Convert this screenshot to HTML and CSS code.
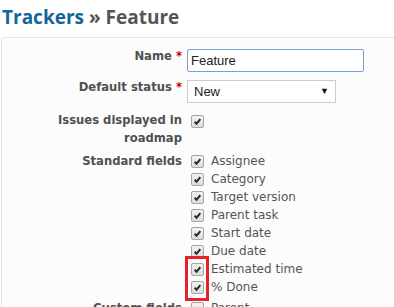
FILE: index.html
```html
<!DOCTYPE html>
<html lang="en">
<head>
    <meta charset="UTF-8">
    <title>Trackers » Feature</title>
    <link rel="stylesheet" href="styles.css">
</head>
<body>
    <h2 class="title"><a href="#" class="crumb">Trackers</a> » Feature</h2>

    <div class="box">
        <div class="row row-input">
            <label class="label">Name <span class="required">*</span></label>
            <div class="field">
                <div class="text-input">Feature</div>
            </div>
        </div>

        <div class="row row-input">
            <label class="label">Default status <span class="required">*</span></label>
            <div class="field">
                <div class="select">
                    <span>New</span>
                    <span class="arrow">▼</span>
                </div>
            </div>
        </div>

        <div class="row row-check">
            <label class="label">Issues displayed in roadmap</label>
            <div class="field">
                <span class="checkbox"><svg viewBox="0 0 13 13"><path d="M3.2 6.8 L5.4 9.2 L9.8 3.6" /></svg></span>
            </div>
        </div>

        <div class="row row-list">
            <label class="label">Standard fields</label>
            <div class="field">
                <ul class="check-list">
                    <li><span class="checkbox"><svg viewBox="0 0 13 13"><path d="M3.2 6.8 L5.4 9.2 L9.8 3.6" /></svg></span>Assignee</li>
                    <li><span class="checkbox"><svg viewBox="0 0 13 13"><path d="M3.2 6.8 L5.4 9.2 L9.8 3.6" /></svg></span>Category</li>
                    <li><span class="checkbox"><svg viewBox="0 0 13 13"><path d="M3.2 6.8 L5.4 9.2 L9.8 3.6" /></svg></span>Target version</li>
                    <li><span class="checkbox"><svg viewBox="0 0 13 13"><path d="M3.2 6.8 L5.4 9.2 L9.8 3.6" /></svg></span>Parent task</li>
                    <li><span class="checkbox"><svg viewBox="0 0 13 13"><path d="M3.2 6.8 L5.4 9.2 L9.8 3.6" /></svg></span>Start date</li>
                    <li><span class="checkbox"><svg viewBox="0 0 13 13"><path d="M3.2 6.8 L5.4 9.2 L9.8 3.6" /></svg></span>Due date</li>
                    <li><span class="checkbox"><svg viewBox="0 0 13 13"><path d="M3.2 6.8 L5.4 9.2 L9.8 3.6" /></svg></span>Estimated time</li>
                    <li><span class="checkbox"><svg viewBox="0 0 13 13"><path d="M3.2 6.8 L5.4 9.2 L9.8 3.6" /></svg></span>% Done</li>
                </ul>
                <div class="highlight"></div>
            </div>
        </div>

        <div class="row row-list">
            <label class="label">Custom fields</label>
            <div class="field">
                <ul class="check-list">
                    <li><span class="checkbox empty"></span>Parent</li>
                </ul>
            </div>
        </div>
    </div>
</body>
</html>
```

FILE: styles.css
```css
* {
    margin: 0;
    padding: 0;
    box-sizing: border-box;
}

body {
    font-family: "DejaVu Sans", Verdana, sans-serif;
    font-size: 12px;
    color: #555;
    background: white;
    padding: 0 0 0 1px;
    overflow: hidden;
}

.title {
    font-family: "Open Sans", "DejaVu Sans", sans-serif;
    font-size: 19px;
    font-weight: bold;
    color: #555;
    line-height: 24px;
    padding: 5px 0 0 1px;
    margin-bottom: 8px;
}

.crumb {
    color: #169;
    text-decoration: none;
}

.box {
    width: 520px;
    background: #fcfcfc;
    border: 1px solid #e4e4e4;
    border-radius: 3px;
    padding: 11px 0 0 0;
}

.row {
    display: flex;
    align-items: flex-start;
    margin-bottom: 8px;
}

.label {
    width: 180px;
    flex-shrink: 0;
    text-align: right;
    font-weight: bold;
    font-size: 11.6px;
    line-height: 18px;
    color: #505050;
}

.row-input .label {
    line-height: 15px;
}

.required {
    color: #bb0000;
}

.field {
    position: relative;
    padding-left: 5px;
}

.text-input {
    width: 177px;
    height: 23px;
    border: 1px solid #7a9ed8;
    border-radius: 2px;
    background: white;
    font-family: "Liberation Sans", Arial, sans-serif;
    font-size: 13px;
    line-height: 21px;
    color: #222;
    padding-left: 3px;
}

.select {
    width: 149px;
    height: 23px;
    border: 1px solid #ccc;
    background: white;
    font-family: "Liberation Sans", Arial, sans-serif;
    font-size: 13px;
    line-height: 21px;
    color: #222;
    padding: 0 6px;
    display: flex;
    justify-content: space-between;
}

.arrow {
    font-size: 9px;
    color: #111;
}

.row-check {
    margin-bottom: 5px;
}

.row-check .field {
    padding-top: 3px;
}

.checkbox {
    display: inline-block;
    width: 13px;
    height: 13px;
    margin-left: 4px;
    border: 1px solid #a5a5a5;
    border-radius: 2px;
    background: linear-gradient(#f2f2f2, #dcdcdc);
    vertical-align: middle;
}

.checkbox svg {
    display: block;
    width: 11px;
    height: 11px;
}

.checkbox path {
    fill: none;
    stroke: #2a2a2a;
    stroke-width: 2.4;
}

.row-list {
    margin-bottom: 3px;
}

.check-list {
    list-style: none;
}

.check-list li {
    height: 18px;
    line-height: 18px;
    display: flex;
    align-items: center;
}

.check-list .checkbox {
    margin-right: 7px;
}

.highlight {
    position: absolute;
    left: 3px;
    top: 104px;
    width: 24px;
    height: 45px;
    border: 3px solid #e8202a;
}
```
